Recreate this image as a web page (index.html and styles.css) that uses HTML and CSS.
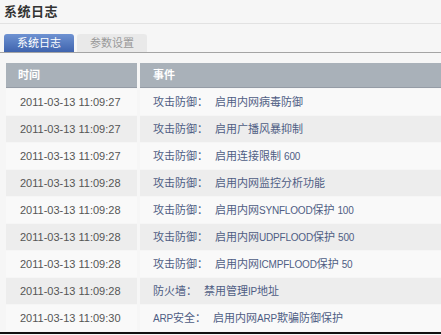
FILE: index.html
```html
<!DOCTYPE html>
<html>
<head>
<meta charset="utf-8">
<link rel="stylesheet" href="styles.css">
</head>
<body>
<div class="page">
  <div class="title">系统日志</div>
  <div class="tabs">
    <div class="tab active">系统日志</div>
    <div class="tab">参数设置</div>
  </div>
  <div class="log">
    <div class="th">时间</div><div class="th">事件</div>
    <div class="td time">2011-03-13 11:09:27</div><div class="td ev"><span class="cat">攻击防御：</span>启用内网病毒防御</div>
    <div class="td time alt">2011-03-13 11:09:27</div><div class="td ev alt"><span class="cat">攻击防御：</span>启用广播风暴抑制</div>
    <div class="td time">2011-03-13 11:09:27</div><div class="td ev"><span class="cat">攻击防御：</span>启用连接限制 <span class="en">600</span></div>
    <div class="td time alt">2011-03-13 11:09:28</div><div class="td ev alt"><span class="cat">攻击防御：</span>启用内网监控分析功能</div>
    <div class="td time">2011-03-13 11:09:28</div><div class="td ev"><span class="cat">攻击防御：</span>启用内网<span class="en">SYNFLOOD</span>保护 <span class="en">100</span></div>
    <div class="td time alt">2011-03-13 11:09:28</div><div class="td ev alt"><span class="cat">攻击防御：</span>启用内网<span class="en">UDPFLOOD</span>保护 <span class="en">500</span></div>
    <div class="td time">2011-03-13 11:09:28</div><div class="td ev"><span class="cat">攻击防御：</span>启用内网<span class="en">ICMPFLOOD</span>保护 <span class="en">50</span></div>
    <div class="td time alt">2011-03-13 11:09:28</div><div class="td ev alt"><span class="cat">防火墙：</span>禁用管理<span class="en">IP</span>地址</div>
    <div class="td time">2011-03-13 11:09:30</div><div class="td ev"><span class="cat"><span class="en">ARP</span>安全：</span>启用内网<span class="en">ARP</span>欺骗防御保护</div>
  </div>
  <div class="frame-bottom"></div>
</div>
</body>
</html>
```
FILE: styles.css
```css
html, body {
  margin: 0;
  padding: 0;
  background: #f6f6f6;
  overflow: hidden;
}
body {
  font-family: "Liberation Sans", "Noto Sans CJK SC", Arial, sans-serif;
  font-size: 12px;
  color: #555;
}
.page {
  width: 441px;
  height: 335px;
  overflow: hidden;
}
.title {
  height: 24px;
  line-height: 24px;
  padding-left: 4px;
  font-size: 13px;
  font-weight: bold;
  color: #333;
  border-bottom: 1px solid #e2e2e2;
  box-sizing: border-box;
  letter-spacing: 0.5px;
}
.tabs {
  display: flex;
  gap: 3px;
  margin-top: 10px;
  padding-left: 4px;
  border-bottom: 1px solid #a4a4a4;
}
.tab {
  width: 70px;
  height: 18px;
  line-height: 18px;
  text-align: center;
  background: #e9e9e9;
  color: #999;
  border-radius: 3px 3px 0 0;
  font-size: 11px;
}
.tab.active {
  background: linear-gradient(#6e92d2, #3f64ae);
  color: #fff;
}
.log {
  display: grid;
  grid-template-columns: 131px 310px;
  column-gap: 3px;
  row-gap: 1px;
  margin-top: 10px;
  margin-left: 6px;
}
.th {
  height: 25px;
  line-height: 24px;
  background: #a9b1b9;
  border-bottom: 1px solid #959ca6;
  box-sizing: border-box;
  color: #fff;
  font-weight: bold;
  font-size: 11px;
  padding-left: 12px;
}
.th + .th {
  padding-left: 13px;
}
.td {
  height: 26px;
  line-height: 26px;
  background: #f9f9f9;
  white-space: nowrap;
}
.td.alt {
  background: #ededed;
}
.time {
  font-size: 11px;
  color: #555;
  padding-left: 14px;
}
.ev {
  color: #4f5d84;
  font-size: 11px;
  padding-left: 13px;
}
.cat {
  margin-right: 7px;
}
.en {
  font-size: 10px;
  letter-spacing: -0.2px;
}
.frame-bottom {
  margin-top: 1px;
  height: 2px;
  background: #111;
}
```
